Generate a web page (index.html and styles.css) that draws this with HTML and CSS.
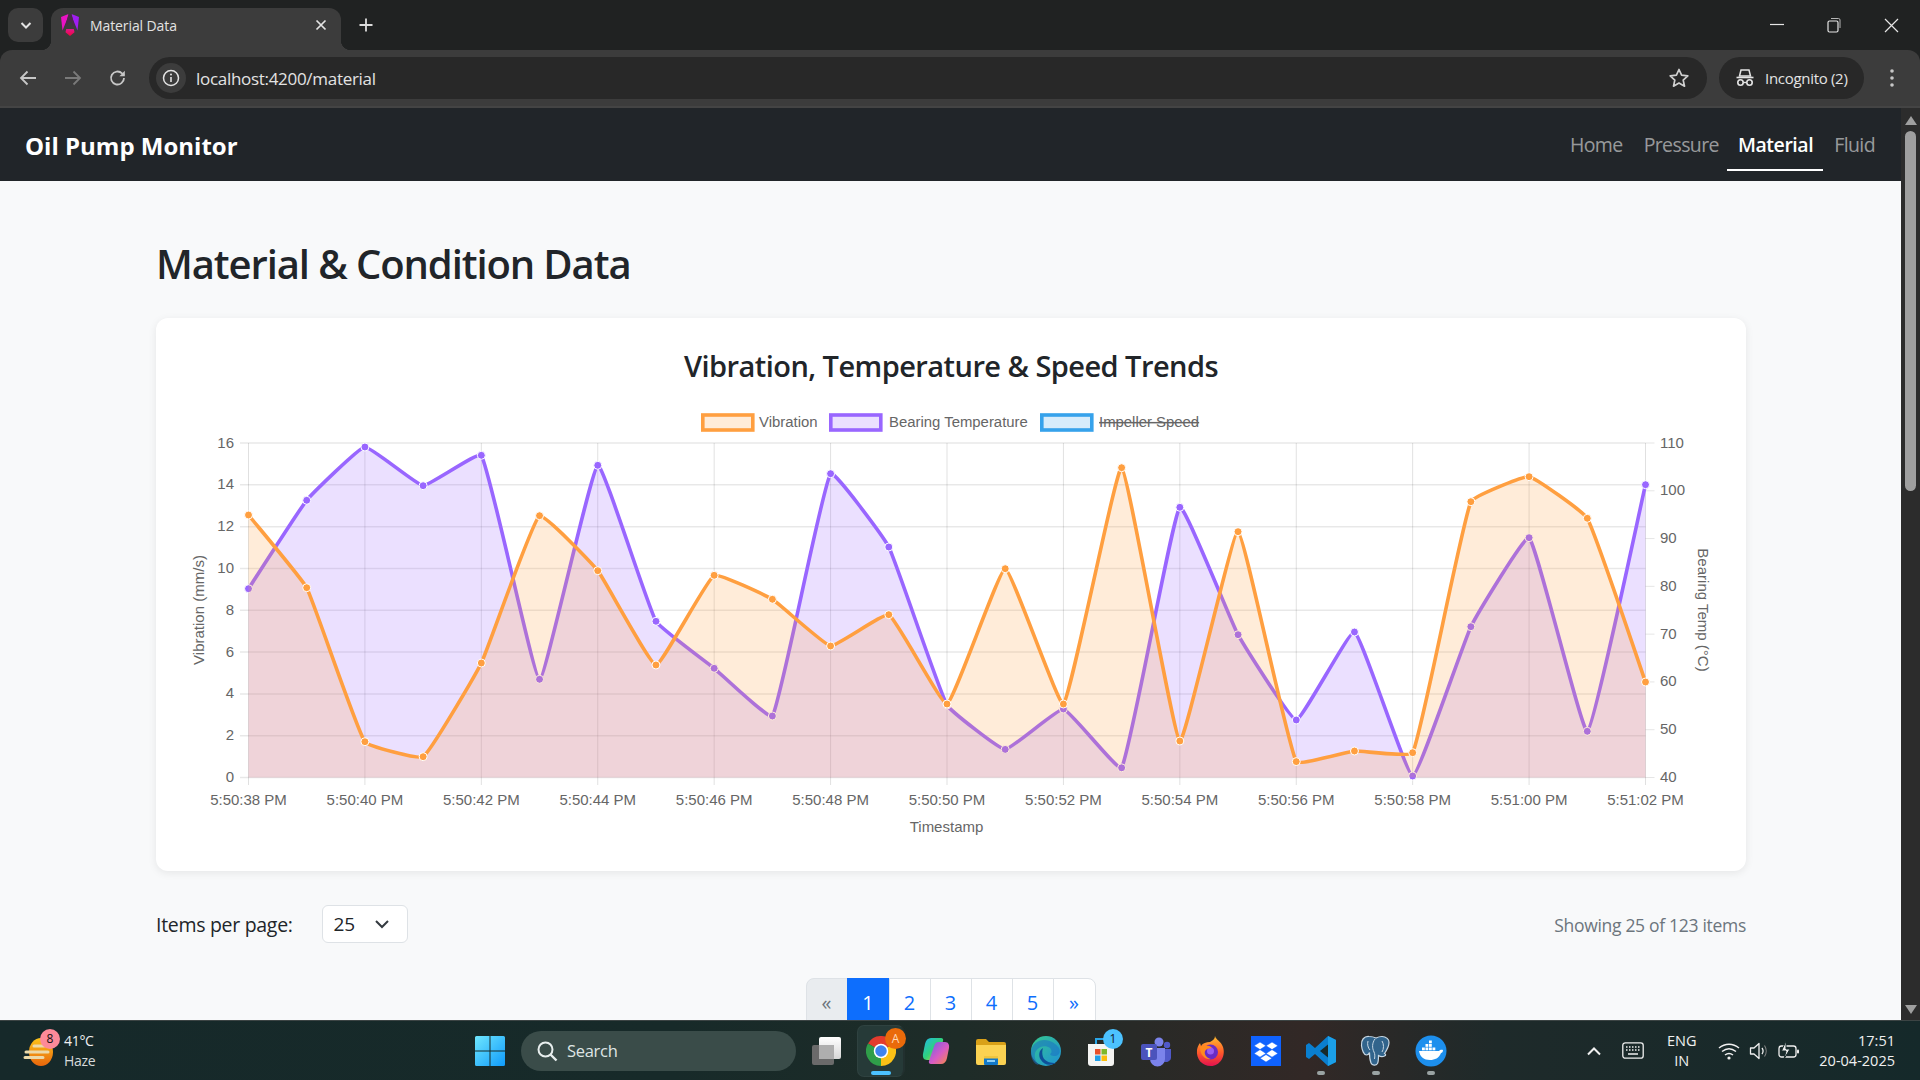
FILE: index.html
```html
<!DOCTYPE html>
<html lang="en">
<head>
<meta charset="utf-8">
<title>Material Data</title>
<link rel="stylesheet" href="styles.css">
</head>
<body>
<header class="tabstrip">
  <button class="tabsearch"><svg width="14" height="14" viewBox="0 0 14 14"><path d="M2.5 5l4.500 4.500L11.500 5" fill="none" stroke="#e3e3e3" stroke-width="2"/></svg></button>
  <div class="tab">
    <svg class="favicon" width="20" height="24" viewBox="0 0 20 24"><defs><linearGradient id="ng2" x1="0" y1="0" x2="0" y2="1"><stop offset="0" stop-color="#e0158e"/><stop offset="1" stop-color="#f0063c"/></linearGradient></defs><path d="M1 4 8.500 1 7 6.500 2.500 17.500z" fill="#ea12c4"/><path d="M19 4 11.500 1 13 6.500 17.500 17.500z" fill="#a01ef2"/><path d="M8.700 1h2.600l3.400 11.500h-2L11.300 9H8.700l-1.400 3.500h-2z" fill="#4a2a4a"/><path d="M6.200 16h7.600l.7 3.200L10 23 5.500 19.200z" fill="url(#ng2)"/></svg>
    <span class="tabtitle">Material Data</span>
    <svg class="tabclose" width="12" height="12" viewBox="0 0 12 12"><path d="M1.500 1.500l9 9m0-9l-9 9" stroke="#e3e3e3" stroke-width="1.700"/></svg>
  </div>
  <svg class="newtab" width="16" height="16" viewBox="0 0 16 16"><path d="M8 1.500v13M1.500 8h13" stroke="#dcdcdc" stroke-width="1.800"/></svg>
  <div class="winctrls">
    <svg width="14" height="14" viewBox="0 0 14 14"><path d="M0 6.500h14" stroke="#e6e6e6" stroke-width="1.200"/></svg>
    <svg width="14" height="16" viewBox="0 0 14 16"><rect x="1" y="4" width="10" height="11" rx="1.500" fill="none" stroke="#e6e6e6" stroke-width="1.200"/><path d="M4 1.500h7.500a1.500 1.500 0 0 1 1.500 1.500v8" fill="none" stroke="#b5b5b5" stroke-width="1"/></svg>
    <svg width="15" height="15" viewBox="0 0 15 15"><path d="M1 1l13 13m0-13L1 14" stroke="#e6e6e6" stroke-width="1.200"/></svg>
  </div>
</header>

<div class="toolbar">
  <svg class="navicon" width="20" height="20" viewBox="0 0 20 20"><path d="M18 10H3.500M9.500 3.500 3 10l6.500 6.500" fill="none" stroke="#c7c7c7" stroke-width="1.800"/></svg>
  <svg class="navicon" width="20" height="20" viewBox="0 0 20 20"><path d="M2 10h14.500M10.500 3.500 17 10l-6.500 6.500" fill="none" stroke="#7a7a7a" stroke-width="1.800"/></svg>
  <svg class="navicon" width="20" height="20" viewBox="0 0 20 20"><path d="M16 10a6.500 6.500 0 1 1-1.900-4.600L16 7.200" fill="none" stroke="#c7c7c7" stroke-width="1.800"/><path d="M16.800 2.800v5.400h-5.400z" fill="#c7c7c7"/></svg>
  <div class="omnibox">
    <span class="siteinfo"><svg width="18" height="18" viewBox="0 0 18 18"><circle cx="9" cy="9" r="7.500" fill="none" stroke="#e3e3e3" stroke-width="1.500"/><path d="M9 8v5" stroke="#e3e3e3" stroke-width="1.600"/><circle cx="9" cy="5.500" r="1" fill="#e3e3e3"/></svg></span>
    <span class="url">localhost:4200/material</span>
    <svg class="star" width="22" height="22" viewBox="0 0 22 22"><path d="M11 2.500l2.600 5.700 6.200.7-4.600 4.200 1.300 6.100L11 16.100l-5.500 3.100 1.300-6.100-4.600-4.200 6.200-.7z" fill="none" stroke="#d0d0d0" stroke-width="1.700" stroke-linejoin="round"/></svg>
  </div>
  <div class="incognito">
    <svg width="20" height="20" viewBox="0 0 20 20"><path d="M6 2h8l1.500 6h-11z" fill="none" stroke="#e3e3e3" stroke-width="1.500"/><path d="M1.500 9.500h17" stroke="#e3e3e3" stroke-width="1.600"/><circle cx="5.500" cy="14.500" r="2.700" fill="none" stroke="#e3e3e3" stroke-width="1.600"/><circle cx="14.500" cy="14.500" r="2.700" fill="none" stroke="#e3e3e3" stroke-width="1.600"/><path d="M8.200 14.500h3.600" stroke="#e3e3e3" stroke-width="1.400"/></svg>
    <span>Incognito (2)</span>
  </div>
  <svg class="kebab" width="6" height="20" viewBox="0 0 6 20"><circle cx="3" cy="3" r="1.800" fill="#c7c7c7"/><circle cx="3" cy="10" r="1.800" fill="#c7c7c7"/><circle cx="3" cy="17" r="1.800" fill="#c7c7c7"/></svg>
</div>

<div class="viewport">
  <div class="page">
    <nav class="navbar">
      <a class="brand">Oil Pump Monitor</a>
      <div class="navlinks">
        <a class="navlink">Home</a>
        <a class="navlink">Pressure</a>
        <a class="navlink active">Material</a>
        <a class="navlink">Fluid</a>
      </div>
    </nav>
    <main class="content">
      <h1 class="pagetitle">Material &amp; Condition Data</h1>
      <section class="card">
        <h2 class="cardtitle">Vibration, Temperature &amp; Speed Trends</h2>
        <svg id="chart" class="chart" viewBox="180 400 1542 450" width="1542" height="450"></svg>
      </section>
      <div class="controls">
        <div class="perpage">
          <span class="perlabel">Items per page:</span>
          <div class="select"><span>25</span><svg width="16" height="16" viewBox="0 0 16 16"><path d="M2 5l6 6 6-6" fill="none" stroke="#343a40" stroke-width="2"/></svg></div>
        </div>
        <span class="showing">Showing 25 of 123 items</span>
      </div>
      <ul class="pagination">
        <li class="pg disabled">«</li>
        <li class="pg active">1</li>
        <li class="pg">2</li>
        <li class="pg">3</li>
        <li class="pg">4</li>
        <li class="pg">5</li>
        <li class="pg small">»</li>
      </ul>
    </main>
  </div>
  <div class="scrollbar">
    <svg width="12" height="9" viewBox="0 0 12 9"><path d="M6 0l6 9H0z" fill="#9f9f9f"/></svg>
    <div class="thumb"></div>
    <svg class="sbdown" width="12" height="9" viewBox="0 0 12 9"><path d="M6 9l6-9H0z" fill="#9f9f9f"/></svg>
  </div>
</div>

<footer class="taskbar">
  <div class="weather">
    <span class="wicon">
      <svg width="36" height="36" viewBox="0 0 36 36"><defs><linearGradient id="sun" x1="0" y1="0" x2="0" y2="1"><stop offset="0" stop-color="#fcc419"/><stop offset="1" stop-color="#e8650c"/></linearGradient></defs><ellipse cx="19" cy="19" rx="12" ry="14" fill="url(#sun)"/><path d="M12 13h10M4 19h22M3 24.500h18" stroke="#ecd9a8" stroke-width="3" stroke-linecap="round"/></svg>
      <span class="wbadge">8</span>
    </span>
    <span class="wtext"><span>41°C</span><span class="dim">Haze</span></span>
  </div>
  <div class="startgroup">
    <svg class="winlogo" width="30" height="30" viewBox="0 0 30 30"><defs><linearGradient id="win" x1="0" y1="0" x2="1" y2="1"><stop offset="0" stop-color="#6fe6fd"/><stop offset="1" stop-color="#0f9bfb"/></linearGradient></defs><path d="M0 1.500A1.500 1.500 0 0 1 1.500 0H14.500v14.500H0zM15.500 0H28.500A1.500 1.500 0 0 1 30 1.500V14.500H15.500zM0 15.500H14.500V30H1.500A1.500 1.500 0 0 1 0 28.500zM15.500 15.500H30V28.500A1.500 1.500 0 0 1 28.500 30H15.500z" fill="url(#win)"/></svg>
    <div class="searchbox">
      <svg width="22" height="22" viewBox="0 0 22 22"><circle cx="9.500" cy="9.500" r="7" fill="none" stroke="#e8eeee" stroke-width="2"/><path d="M14.500 14.500l6 6" stroke="#e8eeee" stroke-width="2.400"/></svg>
      <span>Search</span>
    </div>
  </div>
  <div class="apps">
    <span class="app"><svg width="32" height="32" viewBox="0 0 32 32"><defs><linearGradient id="tv" x1="0" y1="0" x2="0" y2="1"><stop offset="0" stop-color="#fff"/><stop offset="1" stop-color="#d6d6d6"/></linearGradient></defs><rect x="2" y="10" width="22" height="20" rx="2" fill="#6a6a6a"/><rect x="9" y="2" width="22" height="22" rx="2" fill="url(#tv)"/><rect x="9" y="10" width="15" height="14" fill="#aeaeae"/></svg></span>
    <span class="app running">
      <svg width="30" height="30" viewBox="0 0 24 24"><path d="M12 12 1.600 6A12 12 0 0 1 22.400 6z" fill="#e33b2e"/><path d="M12 12 22.400 6A12 12 0 0 1 12 24z" fill="#fbc116"/><path d="M12 12 12 24A12 12 0 0 1 1.600 6z" fill="#2f9e49"/><circle cx="12" cy="12" r="5.800" fill="#fff"/><circle cx="12" cy="12" r="4.600" fill="#3f83ee"/></svg>
      <span class="appbadge orange">A</span>
      <i class="bar blue"></i>
    </span>
    <span class="app"><svg width="30" height="30" viewBox="0 0 30 30"><defs><linearGradient id="cp1" x1="0" y1="0" x2="1" y2="1"><stop offset="0" stop-color="#21b8e8"/><stop offset=".5" stop-color="#2fd07d"/><stop offset="1" stop-color="#f6d321"/></linearGradient><linearGradient id="cp2" x1="0" y1="0" x2="1" y2="1"><stop offset="0" stop-color="#6a5ee8"/><stop offset=".55" stop-color="#d85bc4"/><stop offset="1" stop-color="#f88d3d"/></linearGradient></defs><path d="M10 2h10c2 0 2.500 1.500 2 3l-5.500 16c-.8 2-2 3-4 3H6c-3.500 0-4.500-3-4-6l2-10C4.800 4 7 2 10 2z" fill="url(#cp1)"/><path d="M20 28H10c-2 0-2.500-1.500-2-3l5.500-16c.8-2 2-3 4-3H24c3.500 0 4.500 3 4 6l-2 10c-.8 4-3 6-6 6z" fill="url(#cp2)"/></svg></span>
    <span class="app"><svg width="32" height="32" viewBox="0 0 32 32"><path d="M1 6a2 2 0 0 1 2-2h8l3 3h15a2 2 0 0 1 2 2v3H1z" fill="#d9a018"/><path d="M1 10h30v18a2 2 0 0 1-2 2H3a2 2 0 0 1-2-2z" fill="#fbd252"/><rect x="9" y="21" width="14" height="9" rx="1" fill="#1278c8"/><rect x="9" y="21" width="14" height="2.500" fill="#f0c53e"/><rect x="12" y="25" width="8" height="2" fill="#8ed0f5"/></svg></span>
    <span class="app"><svg width="32" height="32" viewBox="0 0 32 32"><defs><linearGradient id="ed1" x1="0" y1="0" x2="1" y2="1"><stop offset="0" stop-color="#36c98d"/><stop offset="1" stop-color="#1e8fd8"/></linearGradient></defs><circle cx="16" cy="16" r="15" fill="url(#ed1)"/><path d="M1 16C2 9 8 5 14 5c7 0 12 4 15 8 2 4 0 7-3 8-3 0-5 0-6-2 2-1 2-4 0-6-4-3-11-2-14 3-2 3-2 9 3 14C5 30 0 24 1 16z" fill="#1a6fc2" opacity=".55"/><path d="M13 13c-4 2-5 8-2 12 3 5 9 6 15 3-5 0-11-1-13-6-1-3-1-6 0-9z" fill="#0e4f99"/></svg></span>
    <span class="app"><svg width="32" height="32" viewBox="0 0 32 32"><path d="M11 9V4h10v5" fill="none" stroke="#2aa6e8" stroke-width="2"/><path d="M3 9h26v19a3 3 0 0 1-3 3H6a3 3 0 0 1-3-3z" fill="#f4f4f2"/><rect x="10" y="14" width="5.500" height="5.500" fill="#e8502a"/><rect x="16.500" y="14" width="5.500" height="5.500" fill="#7db82a"/><rect x="10" y="20.500" width="5.500" height="5.500" fill="#1f9fe8"/><rect x="16.500" y="20.500" width="5.500" height="5.500" fill="#fbbd0a"/></svg><span class="appbadge sky">1</span></span>
    <span class="app"><svg width="32" height="32" viewBox="0 0 32 32"><circle cx="19" cy="7" r="4.500" fill="#7b83eb"/><circle cx="27" cy="10" r="3.200" fill="#5059c9"/><path d="M22 14h9v9a5 5 0 0 1-8 3z" fill="#5059c9"/><path d="M10 13h15v11a7.500 7.500 0 0 1-15 0z" fill="#7b83eb"/><rect x="1" y="9" width="16" height="16" rx="2" fill="#4b53bc"/><text x="9" y="22" class="teamst">T</text></svg></span>
    <span class="app"><svg width="32" height="32" viewBox="0 0 32 32"><defs><linearGradient id="ff" x1="0" y1="0" x2="0" y2="1"><stop offset="0" stop-color="#ffbd2e"/><stop offset=".55" stop-color="#ff5a2a"/><stop offset="1" stop-color="#e3124f"/></linearGradient></defs><path d="M20 1c1 4 6 5 8 11 3 9-3 19-12 19S1 24 2 15c.4-3 1.500-5 3-7l1 3c2-3 5-4 9-4 3-2 5-3 5-6z" fill="url(#ff)"/><circle cx="15.500" cy="17" r="7.500" fill="#6a2bc4"/><circle cx="15.500" cy="16" r="3.500" fill="#9a5cf0"/><path d="M5 12c5-2 9-2 12 1-3 0-6 1-7 3-1 3 1 7 6 8-5 1-11-3-11-12z" fill="#ff8a1e"/></svg></span>
    <span class="app"><svg width="30" height="30" viewBox="0 0 30 30"><rect width="30" height="30" fill="#0f62fe"/><path d="M9 6l6 3.800-6 3.800-6-3.800zM21 6l6 3.800-6 3.800-6-3.800zM9 13.600l6 3.800-6 3.800-6-3.800zM21 13.600l6 3.800-6 3.800-6-3.800zM15 18.500l6 3.800-6 3.800-6-3.800z" fill="#fff" stroke="#0f62fe" stroke-width=".6"/></svg></span>
    <span class="app"><svg width="32" height="32" viewBox="0 0 32 32"><path d="M23 1l8 4v22l-8 4L10 19l-6 5-3-2v-12l3-2 6 5z" fill="#0a7fd0"/><path d="M23 1l8 4v22l-8 4z" fill="#1b9fe8"/><path d="M23 9.500v13L15 16z" fill="#172a2a"/></svg><i class="bar grey"></i></span>
    <span class="app"><svg width="32" height="32" viewBox="0 0 32 32"><path d="M9 1.500C4 1 1 5 1.500 10.500 2 15.500 4 20 6.500 20c1.500 0 2.500-1 3-2.500 0 4 .5 8 1.500 10.500 1 2.500 5 3 6.500.5 1-2 1-5 1-8 1.500 1 4 1.500 6 .5 2-1 1-2 0-2.500 2-3 4.500-7 4.500-11C29.500 4.500 26 1.500 22 1.500c-2 0-4 .5-6 1.500-2-1-4.500-1.500-7-1.500z" fill="#31648c" stroke="#c8d8e4" stroke-width="1.200"/><path d="M15 4c-3 4-3 9-1 13 1 2 1 4 .5 7M22 6c2 3 2 8 0 11M8 6c-1 3 0 7 2 9" fill="none" stroke="#c8d8e4" stroke-width="1"/></svg><i class="bar grey"></i></span>
    <span class="app"><svg width="32" height="32" viewBox="0 0 32 32"><circle cx="16" cy="16" r="15.500" fill="#1d8fed"/><path d="M4 16h20c1-1 2-1.500 4-1 0 2-1 3-2 3-2 5-6 7-11 7-6 0-10-3-11-9z" fill="#fff"/><g fill="#fff"><rect x="7" y="12.500" width="2.800" height="2.800"/><rect x="10.500" y="12.500" width="2.800" height="2.800"/><rect x="14" y="12.500" width="2.800" height="2.800"/><rect x="17.500" y="12.500" width="2.800" height="2.800"/><rect x="10.500" y="9" width="2.800" height="2.800"/><rect x="14" y="9" width="2.800" height="2.800"/><rect x="14" y="5.500" width="2.800" height="2.800"/></g></svg><i class="bar grey"></i></span>
  </div>
  <div class="tray">
    <svg width="16" height="10" viewBox="0 0 16 10"><path d="M2 8.500l6-6 6 6" fill="none" stroke="#f0f0f0" stroke-width="2"/></svg>
    <svg class="kbd" width="22" height="17" viewBox="0 0 22 17"><rect x=".8" y=".8" width="20.400" height="15.400" rx="2.500" fill="none" stroke="#f0f0f0" stroke-width="1.300"/><path d="M4 5h1.500M7 5h1.500M10 5h1.500M13 5h1.500M16 5h1.500M4 8h1.500M7 8h1.500M10 8h1.500M13 8h1.500M16 8h1.500M6 12h10" stroke="#f0f0f0" stroke-width="1.300"/></svg>
    <span class="lang"><span>ENG</span><span>IN</span></span>
    <svg class="wifi" width="22" height="18" viewBox="0 0 22 18"><path d="M1 6c6-5 14-5 20 0M4 9.500c4.500-3.500 9.500-3.500 14 0M7 13c2.500-2 5.500-2 8 0" fill="none" stroke="#f0f0f0" stroke-width="1.500"/><circle cx="11" cy="16" r="1.600" fill="#f0f0f0"/></svg>
    <svg class="vol" width="20" height="20" viewBox="0 0 20 20"><path d="M1.500 7h3.500l5-4.500v15L5 13H1.500z" fill="none" stroke="#f0f0f0" stroke-width="1.300" stroke-linejoin="round"/><path d="M13 7c1.300 1.800 1.300 4.200 0 6" fill="none" stroke="#f0f0f0" stroke-width="1.300"/><path d="M15.500 4.500c2.200 3.200 2.200 7.800 0 11" fill="none" stroke="#888" stroke-width="1.100"/></svg>
    <svg width="22" height="20" viewBox="0 0 22 20"><rect x="1" y="5" width="17" height="11" rx="2.500" fill="none" stroke="#f0f0f0" stroke-width="1.300"/><rect x="19" y="8.500" width="2" height="4" rx="1" fill="#f0f0f0"/><path d="M8 0 3.500 10H8l-2 8 6-10H8z" fill="#f0f0f0" stroke="#172a2a" stroke-width="1"/></svg>
    <span class="clock"><span>17:51</span><span>20-04-2025</span></span>
  </div>
</footer>
<script src="chart.js"></script>
</body>
</html>
```
FILE: styles.css
```css
* { box-sizing: border-box; }
html, body { height: 100%; }
body {
  margin: 0;
  display: flex;
  flex-direction: column;
  height: 100vh;
  overflow: hidden;
  background: #202222;
  font-family: "Open Sans", "Noto Sans", sans-serif;
  color: #212529;
}

/* browser chrome */
.tabstrip { height: 50px; flex: none; display: flex; align-items: flex-end; padding-left: 8px; }
.tabsearch { width: 35px; height: 34px; margin-bottom: 8px; border: 0; padding: 0; border-radius: 10px; background: #3c3c3c; display: flex; align-items: center; justify-content: center; }
.tab { width: 290px; height: 42px; margin-left: 8px; background: #3c3c3c; border-radius: 12px 12px 0 0; display: flex; align-items: center; padding: 0 14px 8px 9px; position: relative; }
.tab::before, .tab::after { content: ""; position: absolute; bottom: 0; width: 10px; height: 10px; }
.tab::before { left: -10px; background: radial-gradient(circle at 0 0, transparent 10px, #3c3c3c 10.5px); }
.tab::after { right: -10px; background: radial-gradient(circle at 100% 0, transparent 10px, #3c3c3c 10.5px); }
.favicon { flex: none; }
.tabtitle { margin-left: 10px; flex: 1; font-size: 14px; color: #e3e3e3; letter-spacing: -.1px; }
.tabclose { flex: none; }
.newtab { margin: 0 0 17px 17px; flex: none; }
.winctrls { margin-left: auto; display: flex; align-items: center; gap: 43px; padding: 0 21px 0 0; align-self: flex-start; height: 50px; }

.toolbar { height: 58px; flex: none; background: #3c3c3c; border-radius: 12px 12px 0 0; border-bottom: 2px solid #444; display: flex; align-items: center; padding: 0 0 0 18px; }
.navicon { flex: none; margin-right: 25px; }
.navicon:nth-child(3) { margin-right: 21px; }
.omnibox { width: 1558px; height: 42px; flex: none; background: #282828; border-radius: 21px; display: flex; align-items: center; padding: 0 17px 0 7px; }
.siteinfo { width: 30px; height: 30px; border-radius: 50%; background: #3c3c3c; display: flex; align-items: center; justify-content: center; flex: none; }
.url { margin-left: 10px; flex: 1; font-size: 17px; color: #e3e3e3; letter-spacing: -.3px; }
.star { flex: none; }
.incognito { margin-left: 12px; width: 145px; height: 42px; border-radius: 21px; background: #282828; display: flex; align-items: center; gap: 10px; padding-left: 16px; font-size: 15px; color: #e3e3e3; letter-spacing: -.3px; flex: none; white-space: nowrap; }
.kebab { margin-left: 25px; flex: none; }

/* page */
.viewport { flex: 1; min-height: 0; display: flex; overflow: hidden; }
.page { flex: 1; min-width: 0; background: #f8f9fa; }
.navbar { height: 73px; background: #212529; display: flex; align-items: center; justify-content: space-between; padding: 0 16px 0 25px; }
.brand { padding-top: 2px; font-size: 24px; font-weight: 700; color: #fff; letter-spacing: 0; }
.navlinks { display: flex; }
.navlink { height: 52px; padding: 11px 10px 9px 11px; line-height: 30px; font-size: 19.500px; color: rgba(255,255,255,.55); border-bottom: 2px solid transparent; letter-spacing: -.6px; white-space: nowrap; }
.navlink.active { margin-left: -2px; color: #fff; font-weight: 600; border-bottom-color: #fff; letter-spacing: -.45px; }
.content { padding: 59px 155px 0 156px; }
.pagetitle { margin: 0 0 30px; font-size: 40px; line-height: 48px; font-weight: 600; letter-spacing: -1.1px; color: #212529; }
.card { background: #fff; border-radius: 12px; box-shadow: 0 2px 8px rgba(0,0,0,.08); padding: 31px 24px 21px; }
.cardtitle { margin: 0 0 17px; font-size: 29px; line-height: 34px; font-weight: 600; text-align: center; letter-spacing: -.55px; color: #212529; }
.chart { display: block; }
.chart text { font-family: "Liberation Sans", Arial, sans-serif; fill: #666; }
.tick { font-size: 15px; }
.axis { font-size: 15px; }
.leg { font-size: 14.900px; }
.struck { text-decoration: line-through; }
.controls { margin-top: 34px; display: flex; align-items: center; justify-content: space-between; }
.perpage { display: flex; align-items: center; gap: 29px; }
.perlabel { font-size: 19.500px; letter-spacing: -.3px; }
.select { width: 86px; height: 38px; background: #fff; border: 1px solid #dee2e6; border-radius: 6px; display: flex; align-items: center; justify-content: space-between; padding: 0 17px 0 11px; font-size: 19px; letter-spacing: -.3px; }
.showing { margin-top: 2px; font-size: 17.500px; color: #6c757d; letter-spacing: -.3px; }
.pagination { list-style: none; margin: 35px 0 0; padding: 0 1px 0 0; display: flex; justify-content: center; }
.pg { width: 42px; height: 48px; margin-left: -1px; background: #fff; border: 1px solid #dee2e6; color: #0d6efd; font-size: 20px; display: flex; align-items: center; justify-content: center; }
.pg:first-child { margin-left: 0; border-top-left-radius: 8px; }
.pg:last-child { width: 43px; border-top-right-radius: 8px; }
.pg.disabled { background: #e9ecef; color: #6c757d; }
.pg.active { background: #0d6efd; border-color: #0d6efd; color: #fff; width: 43px; }

.scrollbar { width: 19px; flex: none; background: #2c2c2c; display: flex; flex-direction: column; align-items: center; padding-top: 8px; }
.thumb { width: 11px; height: 360px; margin-top: 6px; background: #9f9f9f; border-radius: 6px; }
.sbdown { margin-top: auto; margin-bottom: 6px; }

/* taskbar */
.taskbar { height: 60px; flex: none; display: flex; align-items: center; border-top: 1px solid #3c4444; background: linear-gradient(90deg, #16292a 0%, #172a29 35%, #1e2c28 50%, #322826 68%, #1e2a2a 78%, #15292a 100%); color: #f0f0f0; }
.weather { width: 460px; flex: none; display: flex; align-items: center; padding-left: 22px; gap: 6px; }
.wicon { position: relative; display: flex; }
.wbadge { position: absolute; right: -2px; top: -4px; width: 20px; height: 20px; border-radius: 50%; background: #fd8a99; color: #111; font-size: 12px; display: flex; align-items: center; justify-content: center; }
.wtext { display: flex; flex-direction: column; font-size: 14px; line-height: 20px; letter-spacing: -.3px; }
.dim { color: #d6dada; }
.startgroup { width: 338px; flex: none; display: flex; align-items: center; padding-left: 15px; gap: 16px; }
.winlogo { flex: none; }
.searchbox { width: 275px; height: 40px; flex: none; border-radius: 20px; background: #3a4c49; display: flex; align-items: center; padding-left: 15px; gap: 9px; font-size: 16.500px; color: #dfe5e4; letter-spacing: -.3px; }
.apps { display: flex; flex: none; }
.app { width: 55px; height: 50px; display: flex; align-items: center; justify-content: center; position: relative; }
.app.running { background: #263a38; width: 45px; margin: 0 5px; border-radius: 6px; box-shadow: 3px 0 0 -1px #22302f, 0 0 0 1px #2f4240; }
.bar { position: absolute; left: 50%; bottom: 1px; height: 4px; border-radius: 2px; transform: translateX(-50%); }
.bar.blue { width: 20px; background: #4cc2ff; }
.bar.grey { width: 8px; background: #9aa3a3; }
.appbadge { position: absolute; width: 20px; height: 20px; border-radius: 50%; display: flex; align-items: center; justify-content: center; font-size: 12px; top: 3px; right: 0; }
.appbadge.orange { background: #ea6a0a; color: #ffd9b8; width: 21px; height: 21px; right: -3px; top: 2px; }
.appbadge.sky { background: #4cc2ff; color: #102030; right: 5px; }
.teamst { font-family: "Open Sans", sans-serif; font-size: 12px; font-weight: 700; fill: #fff; text-anchor: middle; }
.tray { margin-left: auto; display: flex; align-items: center; padding-right: 25px; color: #f0f0f0; font-size: 14.500px; }
.kbd { margin-left: 20px; }
.lang { display: flex; flex-direction: column; align-items: center; line-height: 20px; margin: 0 22px 0 23px; font-size: 14.500px; letter-spacing: -.1px; }
.wifi { margin-right: 9px; }
.vol { margin-right: 9px; }
.clock { margin-left: 19px; display: flex; flex-direction: column; align-items: flex-end; line-height: 20px; letter-spacing: 0; }
```
FILE: chart.js
```js
(function () {
  var NS = 'http://www.w3.org/2000/svg';
  var svg = document.getElementById('chart');
  var L = 248.5, R = 1645.5, T = 443, B = 777.5;
  var step = (R - L) / 24;
  var stamps = ['5:50:38 PM','5:50:40 PM','5:50:42 PM','5:50:44 PM','5:50:46 PM','5:50:48 PM','5:50:50 PM','5:50:52 PM','5:50:54 PM','5:50:56 PM','5:50:58 PM','5:51:00 PM','5:51:02 PM'];
  var purple = [588.7,500.3,447,485.7,455.3,679.3,465.3,621.3,668.3,716,473.7,547,705,749.4,709,767.8,507.3,634.7,720,632,776,626.7,537.7,731.3,484.7];
  var orange = [515,587.7,741.7,756.7,663,515.7,570.7,665,575.3,599.3,646,614.7,704,568.7,704,467.7,741,531.7,761.6,751,752.7,501.7,476.7,518.3,682];

  function el(name, attrs, text, cls) {
    var e = document.createElementNS(NS, name);
    for (var k in attrs) e.setAttribute(k, attrs[k]);
    if (cls) e.setAttribute('class', cls);
    if (text) e.textContent = text;
    svg.appendChild(e);
    return e;
  }
  function line(x1, y1, x2, y2, color, w) {
    el('line', { x1: x1, y1: y1, x2: x2, y2: y2, stroke: color, 'stroke-width': w });
  }

  // horizontal grid and left ticks
  for (var i = 0; i <= 8; i++) {
    var y = T + (B - T) * i / 8;
    line(240, y, R, y, 'rgba(0,0,0,.09)', 1.5);
    el('text', { x: 234, y: y + 4.5, 'text-anchor': 'end' }, String(16 - 2 * i), 'tick');
  }
  // vertical grid and bottom ticks
  for (i = 0; i <= 12; i++) {
    var x = L + step * 2 * i;
    line(x, T, x, 785, 'rgba(0,0,0,.12)', 1);
    el('text', { x: x, y: 805, 'text-anchor': 'middle' }, stamps[i], 'tick');
  }
  // right ticks
  for (i = 0; i <= 7; i++) {
    var yr = T + (B - T) * i / 7;
    line(R, yr, R + 9, yr, 'rgba(0,0,0,.1)', 1);
    el('text', { x: 1660, y: yr + 4.5 }, String(110 - 10 * i), 'tick');
  }

  // Chart.js style bezier path
  function build(vals, t) {
    var pts = vals.map(function (v, idx) { return { x: L + step * idx, y: v }; });
    var d = 'M' + pts[0].x + ' ' + pts[0].y;
    function ctrl(p, c, n) {
      var d01 = Math.hypot(c.x - p.x, c.y - p.y), d12 = Math.hypot(n.x - c.x, n.y - c.y);
      var s = d01 + d12 || 1, fa = t * d01 / s, fb = t * d12 / s;
      return {
        px: c.x - fa * (n.x - p.x), py: c.y - fa * (n.y - p.y),
        nx: c.x + fb * (n.x - p.x), ny: c.y + fb * (n.y - p.y)
      };
    }
    for (var i = 0; i < pts.length - 1; i++) {
      var a = pts[i], b = pts[i + 1];
      var ca = ctrl(pts[i - 1] || a, a, b);
      var cb = ctrl(a, b, pts[i + 2] || b);
      var y1 = Math.min(Math.max(ca.ny, T), B), y2 = Math.min(Math.max(cb.py, T), B);
      d += 'C' + ca.nx.toFixed(1) + ' ' + y1.toFixed(1) + ' ' + cb.px.toFixed(1) + ' ' + y2.toFixed(1) + ' ' + b.x.toFixed(1) + ' ' + b.y;
    }
    return { d: d, pts: pts };
  }
  function dataset(vals, rgb) {
    var g = build(vals, 0.1);
    el('path', { d: g.d + 'L' + R + ' ' + B + 'L' + L + ' ' + B + 'Z', fill: 'rgba(' + rgb + ',.2)' });
    el('path', { d: g.d, fill: 'none', stroke: 'rgb(' + rgb + ')', 'stroke-width': 3.6 });
    g.pts.forEach(function (p) {
      el('circle', { cx: p.x, cy: p.y, r: 4, fill: 'rgb(' + rgb + ')', stroke: '#fff', 'stroke-width': 1 });
    });
  }
  dataset(purple, '153,102,255');
  dataset(orange, '255,159,64');

  // legend
  function legend(x, rgb, label, tx, cls) {
    el('rect', { x: x + 1.8, y: 415, width: 50, height: 15, fill: 'rgba(' + rgb + ',.2)', stroke: 'rgb(' + rgb + ')', 'stroke-width': 3.6 });
    el('text', { x: tx, y: 427 }, label, cls);
  }
  legend(701, '255,159,64', 'Vibration', 759, 'leg');
  legend(829, '153,102,255', 'Bearing Temperature', 889, 'leg');
  legend(1040, '54,162,235', 'Impeller Speed', 1099, 'leg struck');

  // axis titles
  el('text', { x: 946.5, y: 832, 'text-anchor': 'middle' }, 'Timestamp', 'axis');
  el('text', { transform: 'translate(204 610) rotate(-90)', 'text-anchor': 'middle' }, 'Vibration (mm/s)', 'axis');
  el('text', { transform: 'translate(1698 610) rotate(90)', 'text-anchor': 'middle' }, 'Bearing Temp (°C)', 'axis');
})();
```
